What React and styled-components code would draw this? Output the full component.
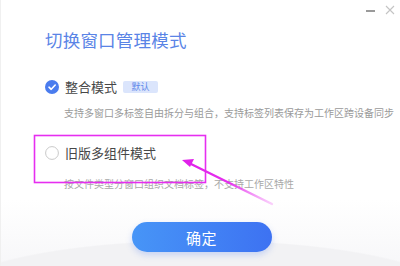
import React from "react";
import styled, { createGlobalStyle } from "styled-components";

const Global = createGlobalStyle`
  html, body { margin: 0; padding: 0; }
  body { font-family: "Noto Sans CJK SC", "Noto Sans", sans-serif; }
`;

const Dialog = styled.div`
  width: 400px;
  height: 266px;
  position: relative;
  overflow: hidden;
  box-sizing: border-box;
  border-left: 1px solid #f0f0f0;
  background:
    radial-gradient(ellipse 262px 60px at 200px 300px, #f2f2f4 98%, rgba(242,242,244,0) 100%),
    linear-gradient(180deg, #ffffff 0%, #ffffff 75%, #f7f7f9 100%);
  display: flex;
  flex-direction: column;
`;

const TopBar = styled.div`
  height: 20px;
  display: flex;
  justify-content: flex-end;
  align-items: center;
  gap: 10px;
  padding-right: 5px;
`;

const Minimize = styled.div`
  width: 9px;
  height: 1.5px;
  background: #9a9a9a;
  margin-top: 2px;
`;

const Content = styled.div`
  padding-left: 44px;
  display: flex;
  flex-direction: column;
`;

const Title = styled.div`
  margin-top: 10px;
  font-size: 17.5px;
  line-height: 20px;
  color: #5a84e6;
  letter-spacing: 0.2px;
`;

const OptionRow = styled.div`
  display: flex;
  align-items: center;
  height: 16px;
  margin-top: ${(p) => p.$top}px;
`;

const Label = styled.span`
  margin-left: 6px;
  font-size: 13px;
  line-height: 16px;
  color: #474747;
`;

const Badge = styled.span`
  margin-left: 6px;
  width: 35px;
  height: 12px;
  border-radius: 2px;
  background: #dbe5fc;
  color: #5b86ea;
  font-size: 9px;
  line-height: 12px;
  text-align: center;
`;

const Desc = styled.div`
  margin-top: ${(p) => p.$top}px;
  padding-left: 19px;
  font-size: 10px;
  line-height: 14px;
  color: ${(p) => p.$color};
  white-space: nowrap;
`;

const Footer = styled.div`
  margin-top: 31px;
  display: flex;
  justify-content: center;
`;

const ConfirmButton = styled.button`
  width: 140px;
  height: 30px;
  border: none;
  border-radius: 15px;
  background: linear-gradient(90deg, #4795f7 0%, #3d72f2 100%);
  box-shadow: 0 3px 6px rgba(70, 120, 240, 0.25);
  color: #fff;
  font-family: inherit;
  font-size: 15px;
  letter-spacing: 0.5px;
  margin-left: 2px;
`;

const Overlay = styled.svg`
  position: absolute;
  left: 0;
  top: 0;
  pointer-events: none;
`;

function CheckedIcon() {
  return (
    <svg width="14" height="14" viewBox="0 0 14 14">
      <circle cx="7" cy="7" r="7" fill="#4a7cee" />
      <path d="M4 7.2 L6.2 9.3 L10.2 5" fill="none" stroke="#fff" strokeWidth="1.6" strokeLinecap="round" strokeLinejoin="round" />
    </svg>
  );
}

function RadioIcon() {
  return (
    <svg width="14" height="14" viewBox="0 0 14 14">
      <circle cx="7" cy="7" r="6.4" fill="#fff" stroke="#c9c9c9" strokeWidth="1" />
    </svg>
  );
}

function CloseIcon() {
  return (
    <svg width="10" height="10" viewBox="0 0 10 10">
      <path d="M1 1 L9 9 M9 1 L1 9" stroke="#c4c4c4" strokeWidth="1.1" />
    </svg>
  );
}

export default function App() {
  return (
    <Dialog>
      <Global />
      <TopBar>
        <Minimize />
        <CloseIcon />
      </TopBar>
      <Content>
        <Title>切换窗口管理模式</Title>
        <OptionRow $top={29}>
          <CheckedIcon />
          <Label>整合模式</Label>
          <Badge>默认</Badge>
        </OptionRow>
        <Desc $top={11} $color="#9a9a9a">
          支持多窗口多标签自由拆分与组合，支持标签列表保存为工作区跨设备同步
        </Desc>
        <OptionRow $top={25}>
          <RadioIcon />
          <Label>旧版多组件模式</Label>
        </OptionRow>
        <Desc $top={16} $color="#a8a8a8">
          按文件类型分窗口组织文档标签，不支持工作区特性
        </Desc>
      </Content>
      <Footer>
        <ConfirmButton>确定</ConfirmButton>
      </Footer>
      <Overlay width="400" height="266" viewBox="0 0 400 266">
        <rect x="33.5" y="135.5" width="171" height="47" fill="none" stroke="#e62ef0" strokeWidth="1.6" />
        <defs>
          <linearGradient id="arrowFade" x1="272" y1="205" x2="182" y2="161" gradientUnits="userSpaceOnUse">
            <stop offset="0" stopColor="#f070f5" stopOpacity="0.3" />
            <stop offset="0.5" stopColor="#e530ee" />
            <stop offset="1" stopColor="#e020ea" />
          </linearGradient>
        </defs>
        <path d="M271 204 L190 164" stroke="url(#arrowFade)" strokeWidth="2.4" strokeLinecap="round" />
        <path d="M181 160 L193 159 L189 167 Z" fill="#e020ea" />
      </Overlay>
    </Dialog>
  );
}
